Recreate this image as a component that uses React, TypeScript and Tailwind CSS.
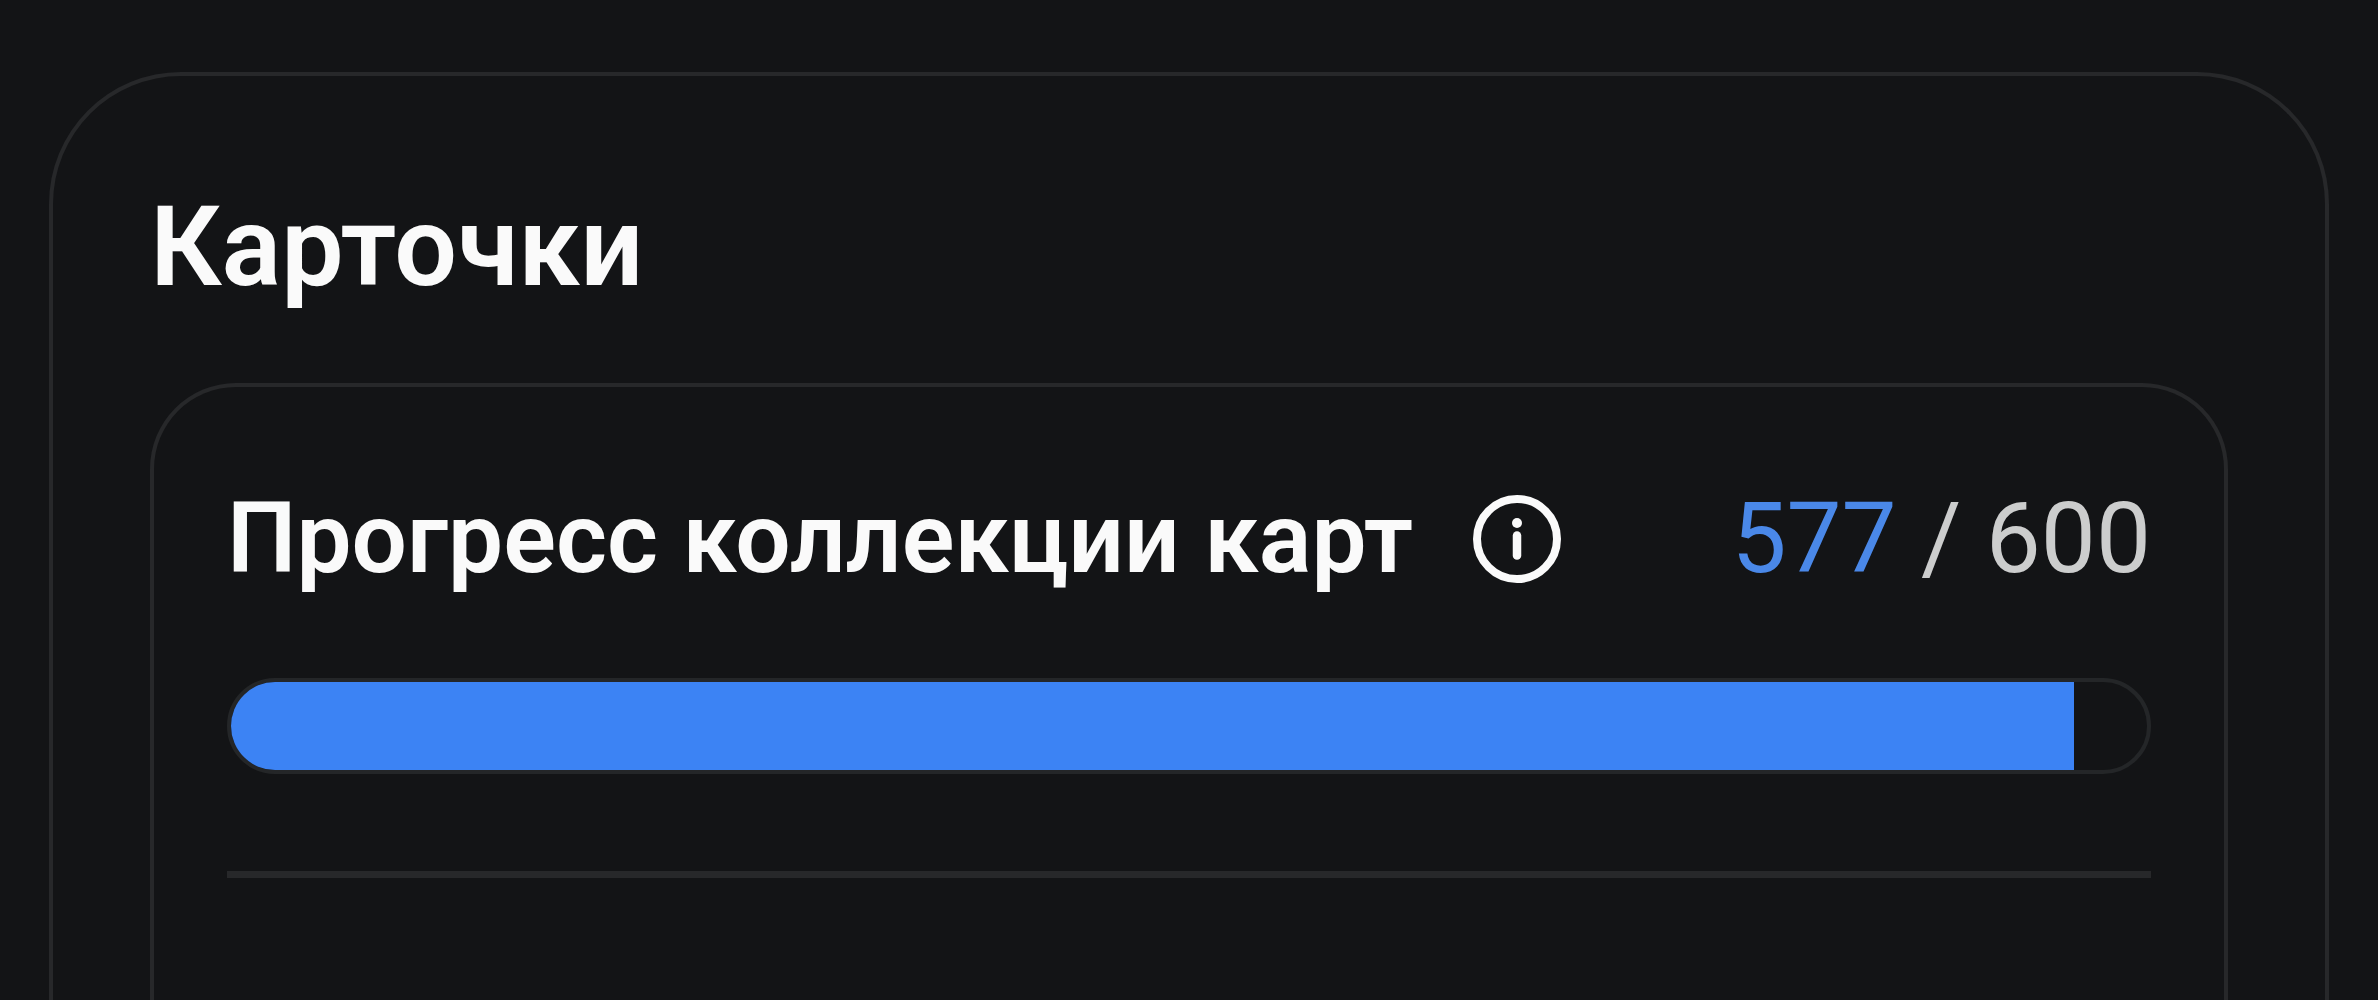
import React from 'react';

const collected = 577;
const total = 600;

function InfoIcon() {
    return (
        <svg className="w-[88px] h-[88px]" viewBox="0 0 88 88" fill="none" aria-hidden="true">
            <circle cx="44" cy="44" r="40" stroke="currentColor" strokeWidth="8" />
            <circle cx="44" cy="28" r="5" fill="currentColor" />
            <path d="M44 40.5V60.5" stroke="currentColor" strokeWidth="8.5" strokeLinecap="round" />
        </svg>
    );
}

export default function App() {
    const percent = (collected / total) * 100;

    return (
        <div className="flex flex-col min-h-screen bg-[#131416] text-[#fafafa] font-['Roboto',sans-serif] px-[49px] pt-[72px]">
            <section className="flex flex-col flex-1 border-4 border-b-0 border-[#27282a] rounded-t-[132px] px-[97px] pt-[107px]">
                <h2 className="text-[111px] leading-[128px] font-semibold">Карточки</h2>
                <div className="flex flex-col flex-1 mt-[72px] border-4 border-b-0 border-[#27282a] rounded-t-[86px] px-[73px] pt-[88px]">
                    <div className="flex items-center justify-between leading-[128px]">
                        <div className="flex items-center gap-[60px]">
                            <h3 id="progress-title" className="text-[98px] font-semibold">Прогресс коллекции карт</h3>
                            <button type="button" aria-label="Подробнее" className="flex">
                                <InfoIcon />
                            </button>
                        </div>
                        <div className="text-[98px] text-[#cccdcd]">
                            <span className="text-[#4a88e8]">{collected}</span> / {total}
                        </div>
                    </div>
                    <div
                        role="progressbar"
                        aria-labelledby="progress-title"
                        aria-valuenow={collected}
                        aria-valuemin={0}
                        aria-valuemax={total}
                        className="mt-[75px] h-24 border-4 border-[#242628] rounded-full overflow-hidden"
                    >
                        <div className="h-full bg-[#3c83f4]" style={{ width: `${percent}%` }}></div>
                    </div>
                    <hr className="mt-[97px] h-[7px] border-0 bg-[#27282a]" />
                </div>
            </section>
        </div>
    );
}
